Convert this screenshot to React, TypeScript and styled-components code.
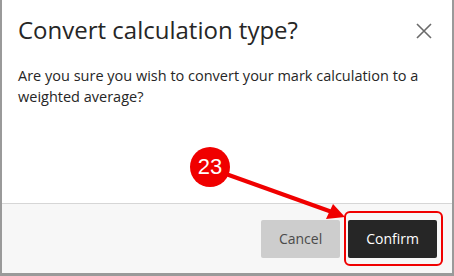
import React, { FC } from "react";
import styled, { createGlobalStyle } from "styled-components";

const GlobalStyle = createGlobalStyle`
    html, body {
        margin: 0;
        padding: 0;
        background: #9a9a9a;
        font-family: "Open Sans", "Liberation Sans", sans-serif;
    }
`;

const Screen = styled.div`
    position: relative;
    width: 454px;
    height: 276px;
    overflow: hidden;
    padding: 0 2px 3px 2px;
    box-sizing: border-box;
`;

const Dialog = styled.div`
    display: flex;
    flex-direction: column;
    width: 450px;
    height: 273px;
    background: #ffffff;
`;

const Header = styled.div`
    display: flex;
    align-items: flex-start;
    justify-content: space-between;
    padding: 13px 20px 0 16px;
`;

const Title = styled.h2`
    margin: 0;
    font-size: 24px;
    font-weight: 400;
    line-height: 33px;
    color: #262626;
`;

const CloseButton = styled.button`
    border: none;
    background: none;
    padding: 0;
    margin-top: 10px;
    width: 16px;
    height: 16px;
    cursor: pointer;
`;

const Body = styled.p`
    flex: 1;
    margin: 0;
    padding: 19px 20px 0 16px;
    font-size: 14.5px;
    line-height: 21px;
    color: #262626;
`;

const Footer = styled.div`
    display: flex;
    justify-content: flex-end;
    align-items: center;
    gap: 8px;
    height: 69px;
    padding: 0 15px 0 0;
    background: #f7f7f7;
    border-top: 1px solid #d6d6d6;
`;

type ButtonProps = {
    primary?: boolean
}

const Button = styled.button<ButtonProps>`
    height: 38px;
    padding: 0 18px;
    border: none;
    border-radius: 2px;
    font-family: inherit;
    font-size: 14px;
    background: ${({ primary }) => primary ? "#262626" : "#cdcdcd"};
    color: ${({ primary }) => primary ? "#ffffff" : "#4a4a4a"};
    cursor: pointer;
`;

const Highlight = styled.div`
    position: absolute;
    left: 344px;
    top: 211px;
    width: 99px;
    height: 55px;
    box-sizing: border-box;
    border: 2px solid #f00000;
    border-radius: 6px;
`;

const Badge = styled.div`
    position: absolute;
    left: 190px;
    top: 147px;
    width: 40px;
    height: 40px;
    border-radius: 50%;
    background: #f00000;
    color: #ffffff;
    font-family: "Liberation Sans", Arial, sans-serif;
    font-size: 22px;
    line-height: 40px;
    text-align: center;
`;

const Arrow = styled.svg`
    position: absolute;
    left: 0;
    top: 0;
    pointer-events: none;
`;

const App: FC = () => (
    <>
        <GlobalStyle />
        <Screen>
            <Dialog>
                <Header>
                    <Title>Convert calculation type?</Title>
                    <CloseButton aria-label="Close">
                        <svg width="16" height="16" viewBox="0 0 16 16">
                            <path d="M1 1 L15 15 M15 1 L1 15" stroke="#6a6a6a" strokeWidth="1.6" />
                        </svg>
                    </CloseButton>
                </Header>
                <Body>
                    Are you sure you wish to convert your mark calculation to a weighted average?
                </Body>
                <Footer>
                    <Button>Cancel</Button>
                    <Button primary>Confirm</Button>
                </Footer>
            </Dialog>
            <Arrow width="454" height="276">
                <line x1="226" y1="174" x2="332" y2="212" stroke="#f00000" strokeWidth="4" />
                <polygon points="345,217 326,219 333,204" fill="#f00000" />
            </Arrow>
            <Badge>23</Badge>
            <Highlight />
        </Screen>
    </>
);

export default App;
